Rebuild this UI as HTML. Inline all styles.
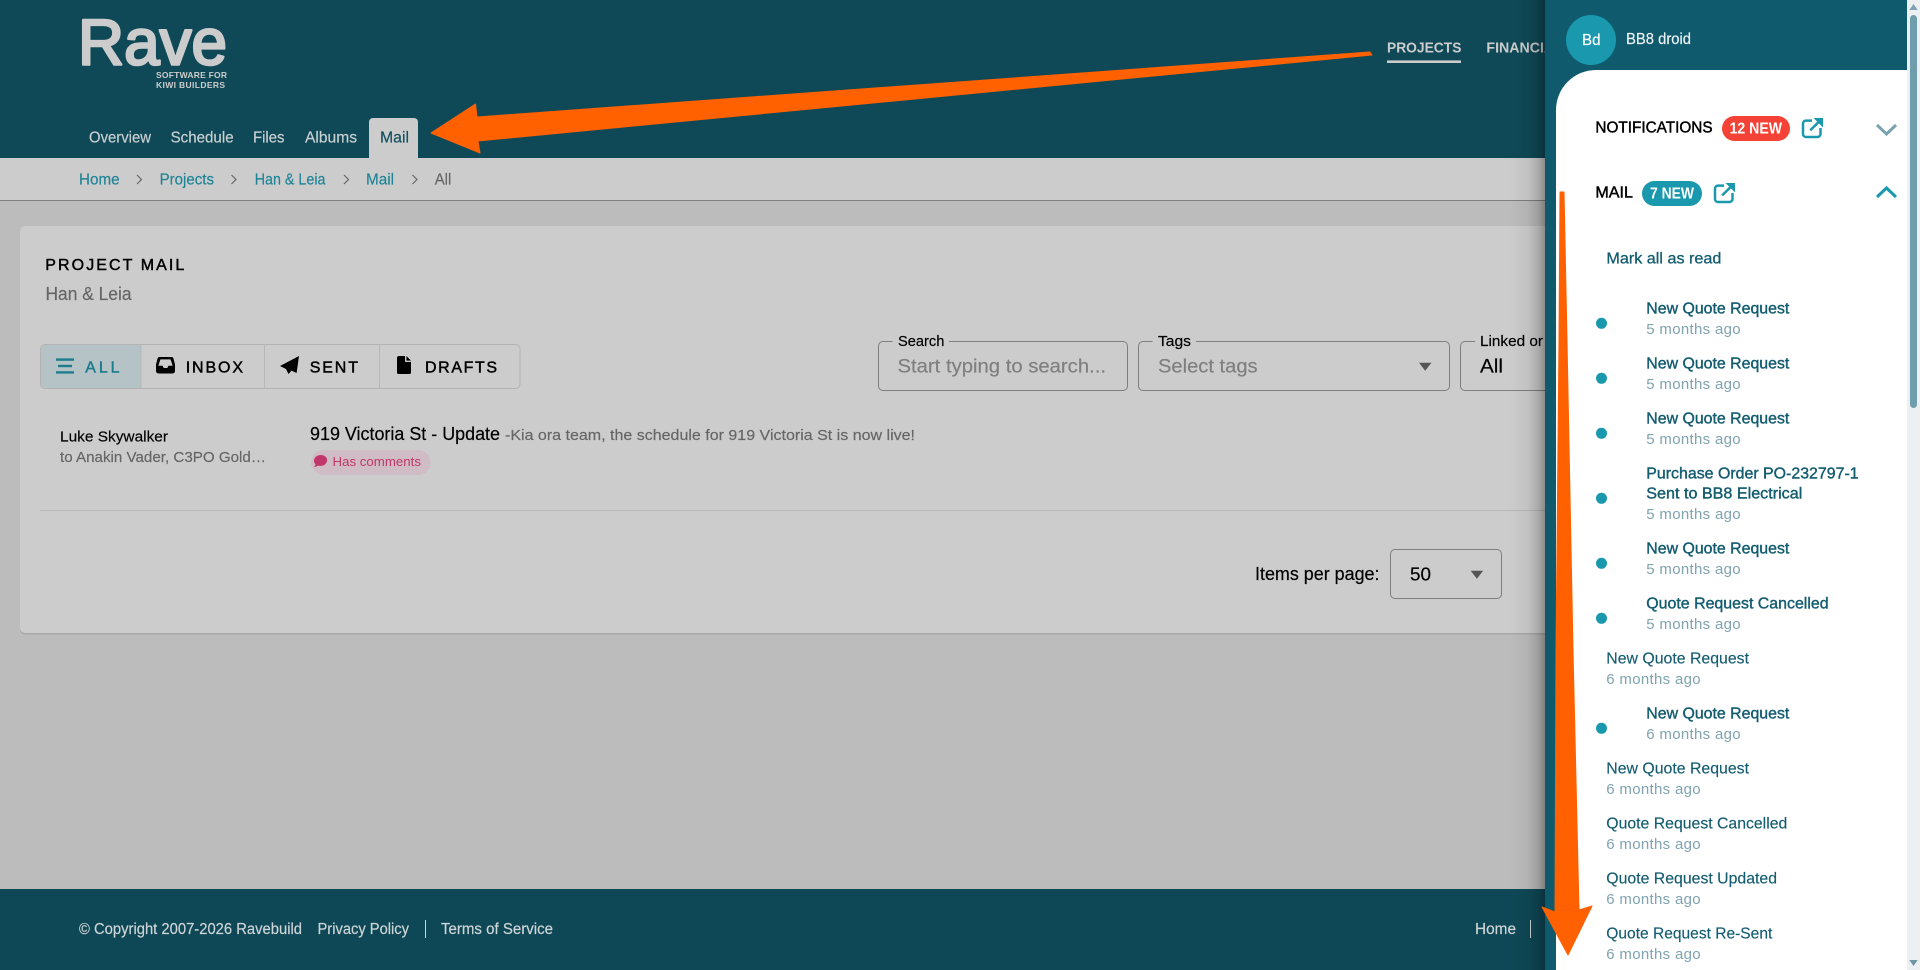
<!DOCTYPE html>
<html lang="en">
<head>
<meta charset="utf-8">
<title>Project Mail</title>
<style>
html,body{margin:0;padding:0;width:1920px;height:970px;overflow:hidden;background:#bcbcbc}
svg{display:block;position:absolute;left:0;top:0}
text{font-family:"Liberation Sans",sans-serif;white-space:pre}
.m{stroke-width:.45px}
.r{stroke-width:.18px}
</style>
</head>
<body>
<svg width="1920" height="970" viewBox="0 0 1920 970" xmlns="http://www.w3.org/2000/svg">
<defs>
<linearGradient id="sh" x1="0" x2="1" y1="0" y2="0">
<stop offset="0" stop-color="#000" stop-opacity="0"/>
<stop offset=".5" stop-color="#000" stop-opacity=".05"/>
<stop offset=".8" stop-color="#000" stop-opacity=".16"/>
<stop offset="1" stop-color="#000" stop-opacity=".32"/>
</linearGradient>
</defs>

<!-- page -->
<rect width="1920" height="970" fill="#bcbcbc"/>

<!-- header -->
<rect width="1920" height="158" fill="#0f4957"/>
<text x="78" y="64.5" font-size="65" fill="#cccccc" stroke="#cccccc" stroke-width="2.6" stroke-linejoin="round" textLength="149" lengthAdjust="spacingAndGlyphs">Rave</text>
<text x="156" y="78" font-size="8.5" font-weight="700" fill="#cccccc" textLength="71" lengthAdjust="spacing">SOFTWARE FOR</text>
<text x="156" y="88" font-size="8.5" font-weight="700" fill="#cccccc" textLength="69" lengthAdjust="spacing">KIWI BUILDERS</text>

<g font-size="16" fill="#c9d0d2" stroke="#c9d0d2" class="r">
<text x="89" y="142.6" textLength="62" lengthAdjust="spacingAndGlyphs">Overview</text>
<text x="170.6" y="142.6" textLength="63" lengthAdjust="spacingAndGlyphs">Schedule</text>
<text x="253" y="142.6" textLength="31.5" lengthAdjust="spacingAndGlyphs">Files</text>
<text x="305" y="142.6" textLength="52" lengthAdjust="spacingAndGlyphs">Albums</text>
</g>
<path d="M369 158V122a4 4 0 0 1 4-4h41a4 4 0 0 1 4 4v36z" fill="#cccccc"/>
<text x="380" y="142.6" font-size="16" fill="#0f4f5f" stroke="#0f4f5f" class="r" textLength="29" lengthAdjust="spacingAndGlyphs">Mail</text>

<text x="1387" y="52.3" font-size="15" font-weight="700" fill="#cccccc" textLength="74.4" lengthAdjust="spacingAndGlyphs">PROJECTS</text>
<rect x="1387" y="60.4" width="74" height="2.6" fill="#cccccc"/>
<text x="1486.4" y="52.3" font-size="15" font-weight="700" fill="#cccccc" textLength="86" lengthAdjust="spacingAndGlyphs">FINANCIALS</text>

<!-- breadcrumb -->
<rect x="0" y="158" width="1920" height="42" fill="#cccccc"/>
<rect x="0" y="200" width="1920" height="1" fill="#7f7f7f"/>
<g font-size="16" class="r">
<text x="79" y="184.7" fill="#1f8496" stroke="#1f8496" textLength="40.6" lengthAdjust="spacingAndGlyphs">Home</text>
<text x="159.6" y="184.7" fill="#1f8496" stroke="#1f8496" textLength="54.4" lengthAdjust="spacingAndGlyphs">Projects</text>
<text x="254.7" y="184.7" fill="#1f8496" stroke="#1f8496" textLength="70.8" lengthAdjust="spacingAndGlyphs">Han &amp; Leia</text>
<text x="366" y="184.7" fill="#1f8496" stroke="#1f8496" textLength="28" lengthAdjust="spacingAndGlyphs">Mail</text>
<text x="434.7" y="184.7" fill="#666666" stroke="#666666" textLength="16.6" lengthAdjust="spacingAndGlyphs">All</text>
</g>
<g fill="none" stroke="#666666" stroke-width="1.2">
<path d="M137 175l4.5 4.5-4.5 4.5"/><path d="M231.5 175l4.5 4.5-4.5 4.5"/><path d="M344 175l4.5 4.5-4.5 4.5"/><path d="M412.5 175l4.5 4.5-4.5 4.5"/>
</g>

<!-- card -->
<rect x="20" y="227.5" width="1700" height="407" rx="5" fill="#a8a8a8"/>
<rect x="20" y="226" width="1700" height="407" rx="5" fill="#cccccc"/>
<text x="45.3" y="269.8" font-size="16" fill="#000" stroke="#000" class="m" textLength="139" lengthAdjust="spacing">PROJECT MAIL</text>
<text x="45.5" y="300" font-size="18" fill="#666666" stroke="#666666" class="r" textLength="86" lengthAdjust="spacingAndGlyphs">Han &amp; Leia</text>

<!-- tab group -->
<path d="M141 344.5H45a4.5 4.5 0 0 0-4.5 4.5v35a4.5 4.5 0 0 0 4.5 4.5h96z" fill="#b5c3c6"/>
<rect x="40.5" y="344.5" width="479.5" height="44" rx="4.5" fill="none" stroke="#b3b3b3"/>
<path d="M141 344.5v44M264.5 344.5v44M379.5 344.5v44" stroke="#b7b7b7"/>
<g fill="#1d7d8d">
<rect x="56" y="358.4" width="18" height="2.4"/><rect x="58" y="364.8" width="14" height="2.4"/><rect x="56" y="371.2" width="18" height="2.4"/>
</g>
<text x="85.3" y="372.7" font-size="16" fill="#1d7d8d" stroke="#1d7d8d" class="m" textLength="34.2" lengthAdjust="spacing">ALL</text>
<path fill-rule="evenodd" fill="#000" d="M159.5 357H171.5a2 2 0 0 1 1.9 1.4L175 364.5V371a2.5 2.5 0 0 1-2.5 2.5H158.5a2.5 2.5 0 0 1-2.5-2.5V364.5l1.6-6.1a2 2 0 0 1 1.9-1.4ZM160.4 359.4 158.4 365.8h4.2l1.1 2.2h3.6l1.1-2.2h4.2L170.6 359.4Z"/>
<text x="185.7" y="372.7" font-size="16" fill="#000" stroke="#000" class="m" textLength="57.3" lengthAdjust="spacing">INBOX</text>
<path fill="#000" d="M299 356 280 366 286 369 288.5 374 291.5 370.6 296.6 373Z"/>
<text x="309.7" y="372.7" font-size="16" fill="#000" stroke="#000" class="m" textLength="48.3" lengthAdjust="spacing">SENT</text>
<path fill="#000" d="M399 356H405V361.2a.8.8 0 0 0 .8.8H411V372.5a1.5 1.5 0 0 1-1.5 1.5H398.5a1.5 1.5 0 0 1-1.5-1.5V358a2 2 0 0 1 2-2ZM406.4 356 411 360.6H406.4Z"/>
<text x="425" y="372.7" font-size="16" fill="#000" stroke="#000" class="m" textLength="72" lengthAdjust="spacing">DRAFTS</text>

<!-- filters -->
<g fill="none" stroke="#7f7f7f">
<rect x="878.5" y="341.5" width="249" height="49" rx="4.5"/>
<rect x="1138.5" y="341.5" width="311" height="49" rx="4.5"/>
<rect x="1460.5" y="341.5" width="200" height="49" rx="4.5"/>
</g>
<rect x="892.5" y="339" width="56.5" height="5" fill="#cccccc"/>
<rect x="1152.5" y="339" width="43.5" height="5" fill="#cccccc"/>
<rect x="1475" y="339" width="90" height="5" fill="#cccccc"/>
<g class="r" stroke="#000">
<text x="898" y="346" font-size="15" fill="#000" textLength="46.4" lengthAdjust="spacingAndGlyphs">Search</text>
<text x="1158" y="346" font-size="15" fill="#000" textLength="33" lengthAdjust="spacingAndGlyphs">Tags</text>
<text x="1480" y="346" font-size="15" fill="#000" textLength="63" lengthAdjust="spacingAndGlyphs">Linked or</text>
</g>
<text x="897.5" y="372.7" font-size="19" fill="#7f7f7f" stroke="#7f7f7f" class="r" textLength="208.5" lengthAdjust="spacingAndGlyphs">Start typing to search...</text>
<text x="1158" y="372.7" font-size="19" fill="#7f7f7f" stroke="#7f7f7f" class="r" textLength="99.6" lengthAdjust="spacingAndGlyphs">Select tags</text>
<path d="M1419 362.7h12.4l-6.2 8z" fill="#555555"/>
<text x="1480" y="372.7" font-size="19" fill="#000" stroke="#000" class="r" textLength="23" lengthAdjust="spacingAndGlyphs">All</text>

<!-- mail row -->
<text x="60" y="441.7" font-size="15" fill="#000" stroke="#000" class="r" textLength="108" lengthAdjust="spacingAndGlyphs">Luke Skywalker</text>
<text x="60" y="462" font-size="15" fill="#666666" stroke="#666666" class="r" textLength="206" lengthAdjust="spacingAndGlyphs">to Anakin Vader, C3PO Gold…</text>
<text x="310" y="440" font-size="18" fill="#000" stroke="#000" class="r" textLength="190" lengthAdjust="spacingAndGlyphs">919 Victoria St - Update</text>
<text x="505" y="440" font-size="15" fill="#666666" stroke="#666666" class="r" textLength="410" lengthAdjust="spacingAndGlyphs">-Kia ora team, the schedule for 919 Victoria St is now live!</text>
<rect x="311" y="450" width="119.5" height="25" rx="12.5" fill="#d0bcc4"/>
<path d="M320.6 455c-3.6 0-6.6 2.6-6.6 5.8 0 1.4.6 2.7 1.5 3.7-.3 1-1.1 1.9-1.5 2.4 1.3 0 2.9-.5 3.9-1.3.8.2 1.7.3 2.7.3 3.6 0 6.5-2.6 6.5-5.8s-2.9-5.1-6.5-5.1z" fill="#c2376b"/>
<text x="332.5" y="466" font-size="13" fill="#c2376b" textLength="88.5" lengthAdjust="spacingAndGlyphs">Has comments</text>
<rect x="40" y="510" width="1600" height="1" fill="#b8b8b8"/>

<!-- pagination -->
<text x="1255" y="580" font-size="18" fill="#000" stroke="#000" class="r" textLength="124.5" lengthAdjust="spacingAndGlyphs">Items per page:</text>
<rect x="1390.5" y="549.5" width="111" height="49" rx="4.5" fill="none" stroke="#7f7f7f"/>
<text x="1410" y="580.7" font-size="18" fill="#000" stroke="#000" class="r" textLength="21" lengthAdjust="spacingAndGlyphs">50</text>
<path d="M1470.7 570.7h12.4l-6.2 8z" fill="#555555"/>

<!-- footer -->
<rect x="0" y="889" width="1920" height="81" fill="#0e4856"/>
<g font-size="15.5" fill="#cfd5d7" stroke="#cfd5d7" class="r">
<text x="79" y="934" textLength="223" lengthAdjust="spacingAndGlyphs">© Copyright 2007-2026 Ravebuild</text>
<text x="317.5" y="934" textLength="91.5" lengthAdjust="spacingAndGlyphs">Privacy Policy</text>
<text x="441" y="934" textLength="112" lengthAdjust="spacingAndGlyphs">Terms of Service</text>
<text x="1475" y="934" textLength="41" lengthAdjust="spacingAndGlyphs">Home</text>
</g>
<rect x="425" y="920" width="1" height="18" fill="#cfd5d7"/>
<rect x="1530" y="920" width="1" height="18" fill="#cfd5d7"/>

<!-- drawer shadow -->
<rect x="1510" y="0" width="35" height="970" fill="url(#sh)"/>

<!-- arrow 1 -->
<path d="M431 133 475.5 104 477 117 1370 52 1372 55 478 141 480 153Z" fill="#ff6000" stroke="#ff6000" stroke-width="1" stroke-linejoin="round"/>

<!-- drawer -->
<rect x="1545" y="0" width="362" height="970" fill="#105a6e"/>
<path d="M1556 110a40 40 0 0 1 40-40H1907V970H1556Z" fill="#ffffff"/>
<rect x="1907" y="0" width="13" height="970" fill="#ecf0f3"/>
<path d="M1913.5 4l4.2 6h-8.4z" fill="#7fa3af"/>
<rect x="1910" y="15" width="7" height="393" rx="3.5" fill="#6f9dab"/>
<path d="M1913.5 966l-4.2-6h8.4z" fill="#6f96a4"/>

<circle cx="1591" cy="40" r="25" fill="#1a99ae"/>
<text x="1582" y="45" font-size="16" fill="#ffffff" stroke="#ffffff" class="r" textLength="18.5" lengthAdjust="spacingAndGlyphs">Bd</text>
<text x="1626" y="44" font-size="15.5" fill="#eef3f4" stroke="#eef3f4" class="r" textLength="65" lengthAdjust="spacingAndGlyphs">BB8 droid</text>

<text x="1595.4" y="132.6" font-size="16" fill="#000" stroke="#000" class="m" textLength="117.2" lengthAdjust="spacingAndGlyphs">NOTIFICATIONS</text>
<rect x="1722" y="116" width="68" height="25" rx="12.5" fill="#f44336"/>
<text x="1729.6" y="133.4" font-size="16" font-weight="700" fill="#ffffff" textLength="52.4" lengthAdjust="spacingAndGlyphs">12 NEW</text>
<g fill="none" stroke="#1a99ae" stroke-width="2.5">
<path d="M1812 120.6H1806a3 3 0 0 0-3 3V134a3 3 0 0 0 3 3H1817.5a3 3 0 0 0 3-3V128"/>
<path d="M1810.2 130.4 1819 121.6"/>
<path d="M1813.5 118H1823V127.5Z" fill="#1a99ae" stroke="none"/>
</g>
<path d="M1877 125 1886.5 134 1896 125" fill="none" stroke="#7ba3af" stroke-width="3"/>

<text x="1595.4" y="197.6" font-size="16" fill="#000" stroke="#000" class="m" textLength="37.6" lengthAdjust="spacingAndGlyphs">MAIL</text>
<rect x="1642" y="181" width="60" height="25" rx="12.5" fill="#1a99ae"/>
<text x="1650" y="198.4" font-size="16" font-weight="700" fill="#ffffff" textLength="44" lengthAdjust="spacingAndGlyphs">7 NEW</text>
<g fill="none" stroke="#1a99ae" stroke-width="2.5" transform="translate(-88 65)">
<path d="M1812 120.6H1806a3 3 0 0 0-3 3V134a3 3 0 0 0 3 3H1817.5a3 3 0 0 0 3-3V128"/>
<path d="M1810.2 130.4 1819 121.6"/>
<path d="M1813.5 118H1823V127.5Z" fill="#1a99ae" stroke="none"/>
</g>
<path d="M1877 197 1886.5 188 1896 197" fill="none" stroke="#1a99ae" stroke-width="3"/>

<text x="1606.4" y="263.6" font-size="16" fill="#135c70" stroke="#135c70" stroke-width=".3" textLength="115" lengthAdjust="spacingAndGlyphs">Mark all as read</text>

<g fill="#1a99ae">
<circle cx="1601.5" cy="323.3" r="5.5"/><circle cx="1601.5" cy="378.3" r="5.5"/><circle cx="1601.5" cy="433.3" r="5.5"/><circle cx="1601.5" cy="498.3" r="5.5"/><circle cx="1601.5" cy="563.3" r="5.5"/><circle cx="1601.5" cy="618.3" r="5.5"/><circle cx="1601.5" cy="728.3" r="5.5"/>
</g>

<g font-size="16" fill="#135c70" stroke="#135c70" stroke-width=".4">
<text x="1646.3" y="313.6" textLength="143" lengthAdjust="spacingAndGlyphs">New Quote Request</text>
<text x="1646.3" y="368.6" textLength="143" lengthAdjust="spacingAndGlyphs">New Quote Request</text>
<text x="1646.3" y="423.6" textLength="143" lengthAdjust="spacingAndGlyphs">New Quote Request</text>
<text x="1646.3" y="478.6" textLength="212.3" lengthAdjust="spacingAndGlyphs">Purchase Order PO-232797-1</text>
<text x="1646.3" y="498.6" textLength="156" lengthAdjust="spacingAndGlyphs">Sent to BB8 Electrical</text>
<text x="1646.3" y="553.6" textLength="143" lengthAdjust="spacingAndGlyphs">New Quote Request</text>
<text x="1646.3" y="608.6" textLength="182.3" lengthAdjust="spacingAndGlyphs">Quote Request Cancelled</text>
<text x="1646.3" y="718.6" textLength="143" lengthAdjust="spacingAndGlyphs">New Quote Request</text>
</g>
<g font-size="16" fill="#135c70" stroke="#135c70" stroke-width=".15">
<text x="1606.3" y="663.6" textLength="142.7" lengthAdjust="spacingAndGlyphs">New Quote Request</text>
<text x="1606.3" y="773.6" textLength="142.7" lengthAdjust="spacingAndGlyphs">New Quote Request</text>
<text x="1606.3" y="828.6" textLength="181" lengthAdjust="spacingAndGlyphs">Quote Request Cancelled</text>
<text x="1606.3" y="883.6" textLength="170.7" lengthAdjust="spacingAndGlyphs">Quote Request Updated</text>
<text x="1606.3" y="938.6" textLength="166" lengthAdjust="spacingAndGlyphs">Quote Request Re-Sent</text>
</g>
<g font-size="15" fill="#7fa3af">
<text x="1646.3" y="334" textLength="94.3" lengthAdjust="spacing">5 months ago</text>
<text x="1646.3" y="389" textLength="94.3" lengthAdjust="spacing">5 months ago</text>
<text x="1646.3" y="444" textLength="94.3" lengthAdjust="spacing">5 months ago</text>
<text x="1646.3" y="519" textLength="94.3" lengthAdjust="spacing">5 months ago</text>
<text x="1646.3" y="574" textLength="94.3" lengthAdjust="spacing">5 months ago</text>
<text x="1646.3" y="629" textLength="94.3" lengthAdjust="spacing">5 months ago</text>
<text x="1646.3" y="739" textLength="94.3" lengthAdjust="spacing">6 months ago</text>
<text x="1606.3" y="684" textLength="94.3" lengthAdjust="spacing">6 months ago</text>
<text x="1606.3" y="794" textLength="94.3" lengthAdjust="spacing">6 months ago</text>
<text x="1606.3" y="849" textLength="94.3" lengthAdjust="spacing">6 months ago</text>
<text x="1606.3" y="904" textLength="94.3" lengthAdjust="spacing">6 months ago</text>
<text x="1606.3" y="959" textLength="94.3" lengthAdjust="spacing">6 months ago</text>
</g>

<!-- arrow 2 -->
<path d="M1560 192 1564 192 1567 340 1573 650 1579 910 1592 906 1568 955 1542 907 1555 912 1556 650 1559 340Z" fill="#ff6000" stroke="#ff6000" stroke-width="1" stroke-linejoin="round"/>
</svg>
</body>
</html>
